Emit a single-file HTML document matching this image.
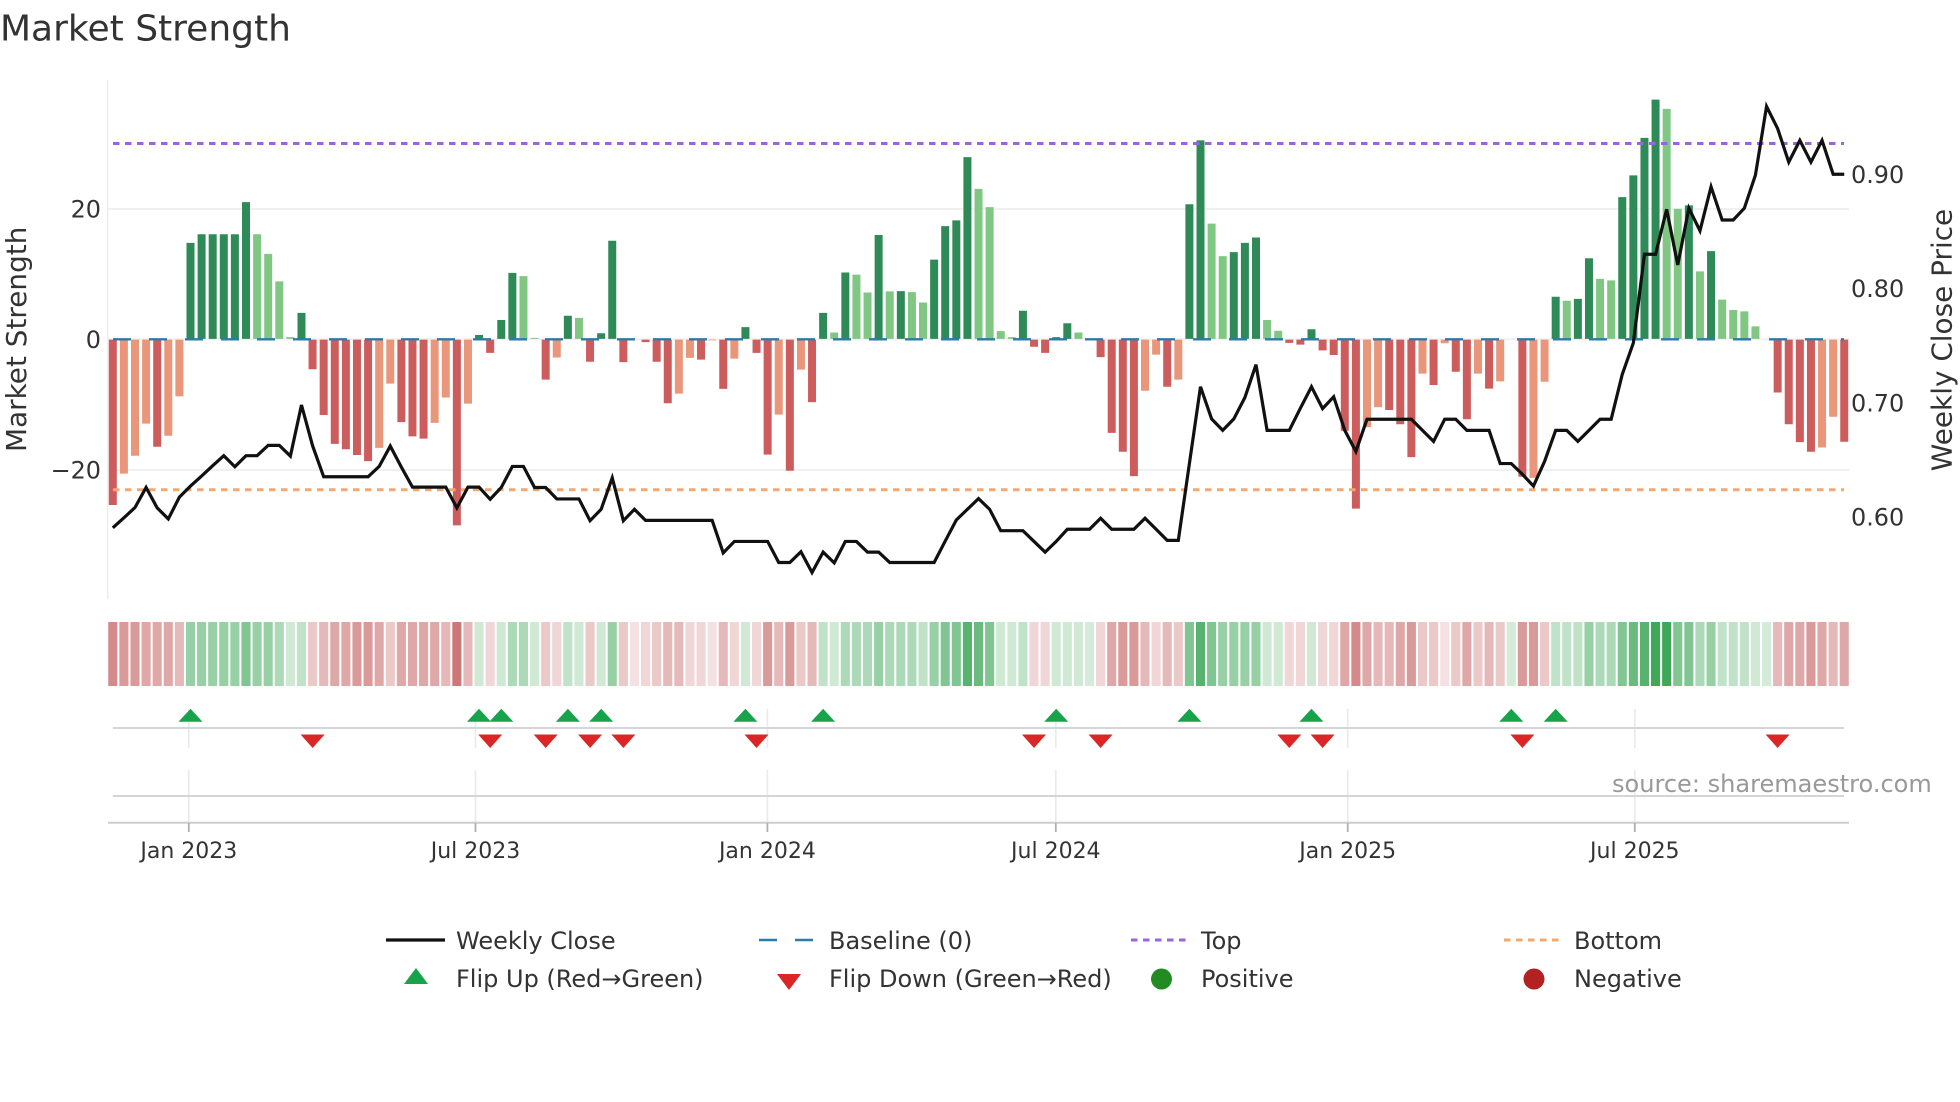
<!DOCTYPE html>
<html><head><meta charset="utf-8"><title>Market Strength</title>
<style>
html,body{margin:0;padding:0;background:#fff;width:1960px;height:1102px;overflow:hidden}
svg{display:block}
text{font-family:"DejaVu Sans","Liberation Sans",sans-serif;fill:#333}
.v path,.v polyline{vector-effect:non-scaling-stroke;fill:none}
</style></head><body>
<svg width="1960" height="1102" viewBox="0 0 1960 1102" xmlns="http://www.w3.org/2000/svg">
<rect width="1960" height="1102" fill="#fff"/>
<text x="0" y="40.5" font-size="36">Market Strength</text>

<!-- grid -->
<path d="M107.7 80V599" stroke="#eeeeee" stroke-width="1.5" fill="none"/>
<path d="M108 209H1849M108 339.3H1849M108 470H1849" stroke="#f0f0f2" stroke-width="2" fill="none"/>

<!-- bars -->
<g class="v" transform="translate(112.8 60) scale(11.099 .35714)">
<path stroke="#cd5c5c" stroke-width="8" d="M0 783V1246M4 783V1083M18 783V866M19 783V994M20 783V1075M21 783V1090M22 783V1106M23 783V1123M26 783V1014M27 783V1054M28 783V1060M31 783V1303M34 783V820M39 783V895M43 783V845M46 783V846M48 783V790M49 783V845M50 783V961M53 783V839M55 783V921M58 783V820M59 783V1105M61 783V1150M63 783V958M83 783V803M84 783V820M89 783V832M90 783V1044M91 783V1097M92 783V1165M95 783V915M106 783V792M107 783V797M109 783V813M110 783V826M111 783V1038M112 783V1256M115 783V980M116 783V1020M117 783V1112M119 783V910M121 783V873M122 783V1006M124 783V920M127 783V1167M150 783V931M151 783V1020M152 783V1070M153 783V1097M156 783V1069"/>
<path stroke="#e9967a" stroke-width="8" d="M1 783V1158M2 783V1108M3 783V1018M5 783V1052M6 783V942M24 783V1086M25 783V906M29 783V1016M30 783V945M32 783V962M40 783V833M51 783V934M52 783V834M54 783V785M56 783V836M60 783V993M62 783V867M93 783V926M94 783V825M96 783V895M113 783V1028M114 783V972M118 783V878M120 783V793M123 783V878M125 783V900M128 783V1170M129 783V901M154 783V1085M155 783V999"/>
<path stroke="#2e8b57" stroke-width="8" d="M7 781V512M8 781V488M9 781V488M10 781V488M11 781V488M12 781V398M17 781V708M33 781V770M35 781V728M36 781V596M41 781V716M44 781V765M45 781V506M57 781V748M64 781V708M66 781V595M69 781V490M71 781V647M74 781V559M75 781V465M76 781V449M77 781V272M82 781V702M85 781V776M86 781V737M97 781V404M98 781V225M101 781V538M102 781V512M103 781V497M108 781V754M130 781V663M132 781V669M133 781V555M136 781V384M137 781V323M138 781V218M139 781V111M142 781V407M144 781V535"/>
<path stroke="#81c784" stroke-width="8" d="M13 781V488M14 781V543M15 781V620M16 781V776M37 781V605M38 781V778M42 781V722M65 781V763M67 781V601M68 781V651M70 781V648M72 781V650M73 781V679M78 781V361M79 781V412M80 781V759M81 781V776M87 781V763M99 781V458M100 781V549M104 781V728M105 781V758M131 781V674M134 781V613M135 781V617M140 781V137M141 781V417M143 781V592M145 781V671M146 781V700M147 781V704M148 781V746"/>
</g>

<!-- reference lines -->
<path d="M113 339.3H1844" stroke="#2b7bab" stroke-width="2.4" stroke-dasharray="18 18" fill="none"/>
<path d="M113 143.5H1844" stroke="#9b64dc" stroke-width="3" stroke-dasharray="6.5 5.5" fill="none"/>
<path d="M113 489.7H1844" stroke="#f2a96c" stroke-width="3" stroke-dasharray="6.5 5.5" fill="none"/>

<!-- price -->
<g class="v" transform="translate(112.8 60) scale(11.099 .35714)">
<polyline stroke="#111" stroke-width="3.2" stroke-linejoin="miter" points="0,1310 1,1282 2,1253 3,1197 4,1254 5,1285 6,1224 7,1193 8,1165 9,1136 10,1108 11,1139 12,1108 13,1108 14,1079 15,1079 16,1109 17,966 18,1080 19,1167 20,1167 21,1167 22,1167 23,1167 24,1138 25,1081 26,1140 27,1196 28,1196 29,1196 30,1196 31,1254 32,1196 33,1196 34,1230 35,1197 36,1138 37,1138 38,1197 39,1197 40,1229 41,1229 42,1229 43,1290 44,1258 45,1170 46,1290 47,1258 48,1289 49,1289 50,1289 51,1289 52,1289 53,1289 54,1289 55,1380 56,1348 57,1348 58,1348 59,1348 60,1407 61,1407 62,1377 63,1435 64,1378 65,1408 66,1348 67,1348 68,1378 69,1378 70,1407 71,1407 72,1407 73,1407 74,1407 75,1347 76,1288 77,1258 78,1228 79,1258 80,1318 81,1318 82,1318 83,1348 84,1378 85,1348 86,1314 87,1314 88,1314 89,1283 90,1314 91,1314 92,1314 93,1283 94,1314 95,1345 96,1345 97,1130 98,915 99,1005 100,1037 101,1005 102,945 103,853 104,1037 105,1037 106,1037 107,975 108,915 109,976 110,943 111,1037 112,1096 113,1006 114,1006 115,1006 116,1006 117,1006 118,1037 119,1068 120,1006 121,1006 122,1037 123,1037 124,1037 125,1130 126,1130 127,1160 128,1193 129,1124 130,1037 131,1037 132,1068 133,1037 134,1006 135,1006 136,880 137,792 138,544 139,544 140,418 141,574 142,415 143,478 144,355 145,448 146,448 147,415 148,322 149,130 150,192 151,286 152,225 153,286 154,225 155,320 156,320"/>
</g>

<!-- heat strip -->
<g class="v" transform="translate(112.8 622) scale(11.099 64)" stroke-width="9.1">
<g stroke="#aa1e1e">
<path stroke-opacity=".13" d="M47 0V1M54 0V1M120 0V1"/>
<path stroke-opacity=".18" d="M34 0V1M40 0V1M48 0V1M52 0V1M53 0V1M56 0V1M58 0V1M83 0V1M84 0V1M89 0V1M94 0V1M106 0V1M107 0V1M109 0V1M110 0V1"/>
<path stroke-opacity=".24" d="M18 0V1M25 0V1M39 0V1M43 0V1M46 0V1M49 0V1M62 0V1M96 0V1M118 0V1M119 0V1M121 0V1M123 0V1M125 0V1M129 0V1"/>
<path stroke-opacity=".31" d="M6 0V1M19 0V1M30 0V1M32 0V1M50 0V1M51 0V1M55 0V1M60 0V1M63 0V1M93 0V1M95 0V1M114 0V1M115 0V1M124 0V1M150 0V1M155 0V1"/>
<path stroke-opacity=".39" d="M3 0V1M4 0V1M5 0V1M20 0V1M21 0V1M24 0V1M26 0V1M27 0V1M28 0V1M29 0V1M90 0V1M111 0V1M113 0V1M116 0V1M122 0V1M151 0V1M152 0V1M154 0V1M156 0V1"/>
<path stroke-opacity=".45" d="M1 0V1M2 0V1M22 0V1M23 0V1M59 0V1M61 0V1M91 0V1M92 0V1M117 0V1M127 0V1M128 0V1M153 0V1"/>
<path stroke-opacity=".52" d="M0 0V1M112 0V1"/>
<path stroke-opacity=".6" d="M31 0V1"/>
</g>
<g stroke="#1a9738">
<path stroke-opacity=".19" d="M88 0V1M126 0V1M149 0V1"/>
<path stroke-opacity=".21" d="M16 0V1M33 0V1M35 0V1M38 0V1M42 0V1M44 0V1M57 0V1M65 0V1M80 0V1M81 0V1M85 0V1M86 0V1M87 0V1M104 0V1M105 0V1M108 0V1M148 0V1"/>
<path stroke-opacity=".28" d="M17 0V1M41 0V1M64 0V1M73 0V1M82 0V1M130 0V1M131 0V1M132 0V1M145 0V1M146 0V1M147 0V1"/>
<path stroke-opacity=".36" d="M15 0V1M36 0V1M37 0V1M66 0V1M67 0V1M68 0V1M70 0V1M71 0V1M72 0V1M134 0V1M135 0V1M143 0V1"/>
<path stroke-opacity=".45" d="M7 0V1M8 0V1M9 0V1M10 0V1M11 0V1M13 0V1M14 0V1M45 0V1M69 0V1M74 0V1M100 0V1M101 0V1M102 0V1M103 0V1M133 0V1M144 0V1"/>
<path stroke-opacity=".55" d="M12 0V1M75 0V1M76 0V1M79 0V1M97 0V1M99 0V1M136 0V1M141 0V1M142 0V1"/>
<path stroke-opacity=".65" d="M78 0V1M137 0V1"/>
<path stroke-opacity=".73" d="M77 0V1M98 0V1M138 0V1"/>
<path stroke-opacity=".84" d="M139 0V1M140 0V1"/>
</g>
</g>

<!-- marker rows -->
<path d="M188.8 708.7V748M475.5 708.7V748M767.4 708.7V748M1055.8 708.7V748M1347.7 708.7V748M1634.8 708.7V748M188.8 770V823M475.5 770V823M767.4 770V823M1055.8 770V823M1347.7 770V823M1634.8 770V823" stroke="#e8eaee" stroke-width="1.6" fill="none"/>
<path d="M112.8 728H1844M112.8 796H1844" stroke="#d3d5d9" stroke-width="2" fill="none"/>
<path d="M108 822.7H1849" stroke="#cccdd0" stroke-width="2" fill="none"/>
<path d="M188.8 823V832M475.5 823V832M767.4 823V832M1055.8 823V832M1347.7 823V832M1634.8 823V832" stroke="#b0b0b0" stroke-width="1.8" fill="none"/>

<path fill="#16a34a" d="M190.5 708.7l12 13h-24zM479 708.7l12 13h-24zM501.3 708.7l12 13h-24zM567.9 708.7l12 13h-24zM601.2 708.7l12 13h-24zM745.4 708.7l12 13h-24zM823.1 708.7l12 13h-24zM1056.2 708.7l12 13h-24zM1189.4 708.7l12 13h-24zM1311.5 708.7l12 13h-24zM1511.3 708.7l12 13h-24zM1555.7 708.7l12 13h-24z"/>
<path fill="#dc2626" d="M312.6 748l-12-13.5h24zM490.2 748l-12-13.5h24zM545.7 748l-12-13.5h24zM590.1 748l-12-13.5h24zM623.4 748l-12-13.5h24zM756.5 748l-12-13.5h24zM1034 748l-12-13.5h24zM1100.6 748l-12-13.5h24zM1289.3 748l-12-13.5h24zM1322.6 748l-12-13.5h24zM1522.4 748l-12-13.5h24zM1777.6 748l-12-13.5h24z"/>

<!-- left axis -->
<g font-size="23.9" text-anchor="end">
<text x="101" y="217.5">20</text>
<text x="101" y="347.8">0</text>
<text x="101" y="478.5">−20</text>
</g>
<text transform="translate(26 339.3) rotate(-90)" font-size="27.9" text-anchor="middle">Market Strength</text>

<!-- right axis -->
<g font-size="23.9">
<text x="1851" y="182.8">0.90</text>
<text x="1851" y="297">0.80</text>
<text x="1851" y="411.4">0.70</text>
<text x="1851" y="525.5">0.60</text>
</g>
<text transform="translate(1951.5 340) rotate(-90)" font-size="27.9" text-anchor="middle">Weekly Close Price</text>

<!-- x labels -->
<g font-size="22" text-anchor="middle">
<text x="188.8" y="858">Jan 2023</text>
<text x="475.5" y="858">Jul 2023</text>
<text x="767.4" y="858">Jan 2024</text>
<text x="1055.8" y="858">Jul 2024</text>
<text x="1347.7" y="858">Jan 2025</text>
<text x="1634.8" y="858">Jul 2025</text>
</g>

<text x="1612" y="792" font-size="24.05" style="fill:#999">source: sharemaestro.com</text>

<!-- legend -->
<path d="M386 940H445" stroke="#111" stroke-width="3.2" fill="none"/>
<path d="M759 940H814" stroke="#2b7bab" stroke-width="2.6" stroke-dasharray="18 18" fill="none"/>
<path d="M1131 940H1186" stroke="#9b64dc" stroke-width="3" stroke-dasharray="6.5 5.5" fill="none"/>
<path d="M1504 940H1559" stroke="#f2a96c" stroke-width="3" stroke-dasharray="6.5 5.5" fill="none"/>
<path fill="#16a34a" d="M416 968l12 16h-24z"/>
<path fill="#dc2626" d="M789 990l-12-16h24z"/>
<circle cx="1161.5" cy="979" r="10.5" fill="#228b22"/>
<circle cx="1534" cy="979" r="10.5" fill="#b22222"/>
<g font-size="24">
<text x="456" y="949">Weekly Close</text>
<text x="829" y="949">Baseline (0)</text>
<text x="1201" y="949">Top</text>
<text x="1574" y="949">Bottom</text>
<text x="456" y="987">Flip Up (Red→Green)</text>
<text x="829" y="987">Flip Down (Green→Red)</text>
<text x="1201" y="987">Positive</text>
<text x="1574" y="987">Negative</text>
</g>
</svg>
</body></html>
